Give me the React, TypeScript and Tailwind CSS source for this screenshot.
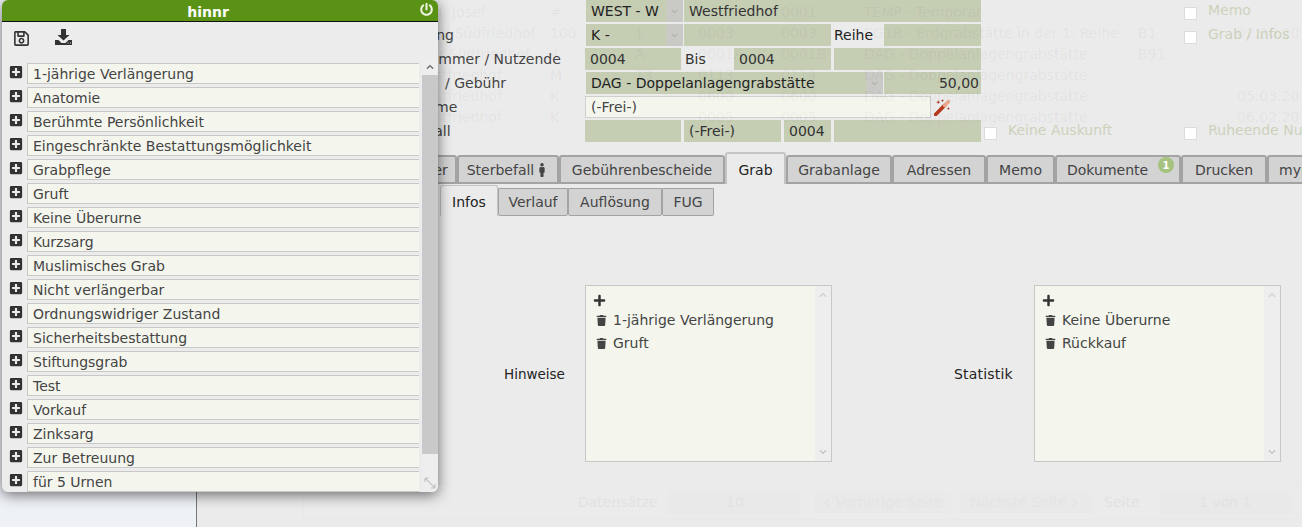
import React from "react";
import { FaPlusSquare, FaRegSave, FaPlus, FaTrash, FaMale, FaChevronUp, FaChevronDown, FaPowerOff, FaChevronLeft, FaChevronRight } from "react-icons/fa";

const FONT = "font-['DejaVu_Sans',sans-serif]";

const hints = [
  "1-jährige Verlängerung", "Anatomie", "Berühmte Persönlichkeit", "Eingeschränkte Bestattungsmöglichkeit",
  "Grabpflege", "Gruft", "Keine Überurne", "Kurzsarg", "Muslimisches Grab", "Nicht verlängerbar",
  "Ordnungswidriger Zustand", "Sicherheitsbestattung", "Stiftungsgrab", "Test", "Vorkauf", "Zinksarg",
  "Zur Betreuung", "für 5 Urnen",
];

const ghostRows = [
  { pl: "pl-[216px]", c: ["Graf, Josef", "#", "", "", "0001", "TEMP - Temporär", "", ""] },
  { pl: "pl-[225px]", c: ["Neu Südfriedhof", "100", "1", "0003", "0003", "EG1R - Erdgrabstätte in der 1. Reihe", "B1", "02.20.20"] },
  { pl: "pl-[214px]", c: ["Alter Südfriedhof", "4", "A", "0001A", "0001B", "DAG - Doppelanlagengrabstätte", "B91", ""] },
  { pl: "pl-[216px]", c: ["Westfriedhof", "M", "13", "0113", "0114", "DAG - Doppelanlagengrabstätte", "", ""] },
  { pl: "pl-[216px]", c: ["Westfriedhof", "K", "", "0600", "0600", "DAG - Doppelanlagengrabstätte", "", "05.03.20"] },
  { pl: "pl-[216px]", c: ["Westfriedhof", "K", "", "0005", "0005", "DAG - Doppelanlagengrabstätte", "", "06.02.20"] },
];

const tabs: { label: string; w: string; extra?: React.ReactNode; active?: boolean }[] = [
  { label: "Nutzer", w: "w-[65px]" },
  { label: "Sterbefall", w: "w-[102px]", extra: <FaMale className="text-[14px] text-[#444] ml-[1px]" /> },
  { label: "Gebührenbescheide", w: "w-[166px]" },
  { label: "Grab", w: "w-[61px]", active: true },
  { label: "Grabanlage", w: "w-[106px]" },
  { label: "Adressen", w: "w-[94px]" },
  { label: "Memo", w: "w-[69px]" },
  { label: "Dokumente", w: "w-[126px]" },
  { label: "Drucken", w: "w-[86px]" },
];

function Field({ w, children, right }: { w: string; children?: React.ReactNode; right?: boolean }) {
  return (
    <div className={`${w} h-[22px] shrink-0 bg-[#c5cdb3] flex items-center pt-[1px] text-[#333] ${right ? "justify-end pr-[2px]" : "pl-[5px]"}`}>
      {children}
    </div>
  );
}

function SelectField({ w, children }: { w: string; children: React.ReactNode }) {
  return (
    <div className={`${w} h-[22px] shrink-0 bg-[#c5cdb3] flex items-center pl-[5px] text-[#222] relative overflow-hidden`}>
      <span className="flex-1 whitespace-nowrap overflow-hidden pt-[1px]">{children}</span>
      <span className="w-[17px] h-[22px] bg-[#c9c9c5] flex items-center justify-center shrink-0">
        <FaChevronDown className="text-[7px] text-[#b0b0ac]" />
      </span>
    </div>
  );
}

function Check({ label, cls }: { label: string; cls: string }) {
  return (
    <div className={`flex items-center h-[22px] shrink-0 ${cls}`}>
      <span className="w-[13px] h-[13px] bg-white border border-[#dcdcdc] mt-[4px] shrink-0" />
      <span className="ml-[11px] text-[#ccd2bb] whitespace-nowrap -mt-[2px]">{label}</span>
    </div>
  );
}

function Label({ children, pl }: { children?: React.ReactNode; pl: string }) {
  return <div className={`w-[388px] shrink-0 pt-[1px] text-[#444] whitespace-nowrap overflow-hidden ${pl}`}>{children}</div>;
}

function ListBox({ items }: { items: string[] }) {
  return (
    <div className="w-[247px] h-[177px] shrink-0 border border-[#c8c8c8] bg-[#f4f6ee] flex">
      <div className="flex-1 pt-[8px] pl-[7px] text-[#444]">
        <FaPlus className="text-[13px] text-[#333]" />
        <div className="mt-[2px]">
          {items.map((t) => (
            <div key={t} className="flex items-center h-[23px] pl-[3px]">
              <FaTrash className="text-[11px] text-[#444] mr-[6px]" />
              <span>{t}</span>
            </div>
          ))}
        </div>
      </div>
      <div className="w-[16px] bg-[#eeeeee] flex flex-col justify-between items-center py-[5px]">
        <FaChevronUp className="text-[8px] text-[#d0d0d0]" />
        <FaChevronDown className="text-[8px] text-[#c4c4c4]" />
      </div>
    </div>
  );
}

export default function App() {
  return (
    <div className={`relative w-[1302px] h-[527px] overflow-hidden bg-[#ebebeb] flex text-[14px] ${FONT}`}>
      <aside className="w-[197px] h-full bg-[#eef1f6] border-r border-[#777] shrink-0" />

      <main className="flex-1 min-w-0 relative">
        {/* form */}
        <div className="flex flex-col gap-[2px]">
          <div className="flex h-[22px] items-center">
            <Label pl="pl-[198px]" />
            <div className="w-[1px] shrink-0" />
            <SelectField w="w-[97px]">WEST - W</SelectField>
            <div className="w-[1px] shrink-0" />
            <Field w="w-[297px]">Westfriedhof</Field>
            <Check label="Memo" cls="ml-[203px]" />
          </div>
          <div className="flex h-[22px] items-center">
            <Label pl="pl-[196px]">Ordnung</Label>
            <div className="w-[1px] shrink-0" />
            <SelectField w="w-[97px]">K -</SelectField>
            <div className="w-[1px] shrink-0" />
            <Field w="w-[147px]" />
            <span className="w-[53px] shrink-0 pl-[3px] pt-[1px] text-[#222]">Reihe</span>
            <Field w="w-[97px]" />
            <Check label="Grab / Infos" cls="ml-[203px]" />
          </div>
          <div className="flex h-[22px] items-center">
            <Label pl="pl-[222px]">Nummer / Nutzende</Label>
            <Field w="w-[96px]">0004</Field>
            <span className="w-[53px] shrink-0 pl-[4px] pt-[1px] text-[#333]">Bis</span>
            <Field w="w-[97px]">0004</Field>
            <div className="w-[3px] shrink-0" />
            <Field w="w-[147px]" />
          </div>
          <div className="flex h-[22px] items-center">
            <Label pl="pl-[248px]">/ Gebühr</Label>
            <div className="w-[1px] shrink-0" />
            <SelectField w="w-[297px]">DAG - Doppelanlagengrabstätte</SelectField>
            <div className="w-[1px] shrink-0" />
            <Field w="w-[97px]" right>50,00</Field>
          </div>
          <div className="flex h-[22px] items-center">
            <Label pl="pl-[219px]">Name</Label>
            <div className="w-[346px] h-[22px] shrink-0 bg-[#f4f6ee] border border-[#cfcfcf] flex items-center pl-[5px] text-[#444]">(-Frei-)</div>
            <svg viewBox="0 0 16 16" className="w-[17px] h-[17px] ml-[3px] shrink-0">
              <path d="M1.5 14.5 L10 6" stroke="#b5391c" strokeWidth="3.4" strokeLinecap="round" />
              <path d="M10 6 L13.5 2.5" stroke="#e8a58c" strokeWidth="3.4" strokeLinecap="round" />
              <path d="M4 1.5v3M2.5 3h3M8 0.5v2M7 1.5h2M13.5 8v2M12.5 9h2" stroke="#a8321a" strokeWidth="0.8" />
            </svg>
          </div>
          <div className="flex h-[22px] items-center">
            <Label pl="pl-[186px]">Sterbefall</Label>
            <Field w="w-[96px]" />
            <div className="w-[3px] shrink-0" />
            <Field w="w-[97px]">(-Frei-)</Field>
            <div className="w-[3px] shrink-0" />
            <Field w="w-[47px]">0004</Field>
            <div className="w-[3px] shrink-0" />
            <Field w="w-[147px]" />
            <Check label="Keine Auskunft" cls="ml-[3px]" />
            <Check label="Ruheende Nutzung" cls="ml-[72px]" />
          </div>
        </div>

        {/* tabs */}
        <div className="flex items-end h-[32px] mt-[10px] ml-[195px] whitespace-nowrap">
          {tabs.map((t) => (
            <div
              key={t.label}
              className={`${t.w} shrink-0 relative flex items-center rounded-t-[3px] border-x-2 border-t-2 ${
                t.label === "Dokumente" ? "justify-start pl-[10px]" : "justify-center"
              } ${
                t.active
                  ? "h-[32px] pt-[3px] bg-[#ebebeb] border-[#c4c4c4] border-x border-t text-[#222]"
                  : "h-[29px] pt-[1px] bg-[#d3d3d3] border-[#a3a3a3] border-b-2 text-[#444]"
              }`}
            >
              {t.label}
              {t.extra}
              {t.label === "Dokumente" && (
                <span className="absolute right-[5px] top-[0px] w-[16px] h-[16px] rounded-full bg-[#a5c27f] text-white text-[10px] font-bold flex items-center justify-center">1</span>
              )}
            </div>
          ))}
          <div className="w-[60px] shrink-0 h-[29px] pt-[1px] bg-[#d3d3d3] border-2 border-[#a3a3a3] border-r-0 rounded-t-[3px] flex items-center pl-[10px] text-[#444] overflow-hidden">mylife</div>
        </div>

        {/* sub tabs */}
        <div className="flex items-end h-[31px] mt-[1px] ml-[243px]">
          <div className="w-[58px] h-[31px] pt-[3px] bg-[#ebebeb] border-x border-t border-[#c4c4c4] rounded-t-[3px] flex items-center justify-center text-[#222]">Infos</div>
          <div className="w-[70px] h-[28px] pt-[1px] bg-[#d3d3d3] border border-[#a3a3a3] rounded-b-[2px] flex items-center justify-center text-[#444]">Verlauf</div>
          <div className="w-[94px] h-[28px] pt-[1px] bg-[#d3d3d3] border border-[#a3a3a3] rounded-b-[2px] flex items-center justify-center text-[#444]">Auflösung</div>
          <div className="w-[52px] h-[28px] pt-[1px] bg-[#d3d3d3] border border-[#a3a3a3] rounded-b-[2px] flex items-center justify-center text-[#444]">FUG</div>
        </div>

        {/* lists */}
        <div className="flex items-center mt-[69px] ml-[307px] text-[#222]">
          <span className="w-[81px] shrink-0 text-[13.5px] pt-[2px]">Hinweise</span>
          <ListBox items={["1-jährige Verlängerung", "Gruft"]} />
          <span className="w-[80px] ml-[122px] shrink-0 tracking-[0.2px] pt-[2px]">Statistik</span>
          <ListBox items={["Keine Überurne", "Rückkauf"]} />
        </div>

        {/* faded pager */}
        <div className="mt-[21px] ml-[106px] w-[1100px] h-[37px] pt-[2px] border-t border-l border-b border-[#e8e8e8] rounded-l-[4px] flex items-center pl-[274px] text-[#e2e2e2] whitespace-nowrap">
          <span className="w-[91px] shrink-0">Datensätze</span>
          <div className="w-[132px] h-[22px] shrink-0 bg-[#e9e9e9] rounded-[3px] flex items-center justify-center">10</div>
          <div className="w-[137px] h-[20px] shrink-0 ml-[13px] bg-[#e9e9e9] flex items-center justify-center text-[#e4e4e4] gap-[3px] overflow-hidden"><FaChevronLeft className="text-[10px]" />Vorherige Seite</div>
          <div className="w-[132px] h-[20px] shrink-0 ml-[8px] bg-[#e9e9e9] flex items-center justify-center text-[#e4e4e4] gap-[3px] overflow-hidden">Nächste Seite<FaChevronRight className="text-[10px]" /></div>
          <span className="w-[56px] shrink-0 ml-[13px]">Seite</span>
          <div className="w-[131px] h-[22px] shrink-0 bg-[#e9e9e9] rounded-[3px] flex items-center justify-center">1 von 1</div>
        </div>

        {/* faded record list showing through the form */}
        <div className="absolute left-0 top-[2px] pointer-events-none text-black/[0.05] whitespace-nowrap">
          {ghostRows.map((r, i) => (
            <div key={i} className="flex h-[21px] items-center">
              <span className={`w-[353px] shrink-0 ${r.pl}`}>{r.c[0]}</span>
              <span className="w-[85px] shrink-0">{r.c[1]}</span>
              <span className="w-[63px] shrink-0">{r.c[2]}</span>
              <span className="w-[83px] shrink-0">{r.c[3]}</span>
              <span className="w-[83px] shrink-0">{r.c[4]}</span>
              <span className="w-[274px] shrink-0">{r.c[5]}</span>
              <span className="w-[99px] shrink-0">{r.c[6]}</span>
              <span>{r.c[7]}</span>
            </div>
          ))}
        </div>
      </main>

      {/* hinnr popup */}
      <div className="absolute left-[2px] top-0 w-[436px] h-[492px] bg-[#ececec] rounded-[6px] shadow-[0_3px_14px_rgba(0,0,0,0.55)] overflow-hidden flex flex-col">
        <div className="h-[22px] pr-[24px] pt-[3px] bg-[#5a9216] border-b border-[#111] relative flex items-center justify-center text-white font-bold shrink-0">
          hinnr
          <FaPowerOff className="absolute right-[5px] top-[3px] text-[13px] text-[#eef6e2]" />
        </div>
        <div className="h-[36px] flex items-start pt-[8px] pl-[11px] shrink-0">
          <FaRegSave className="text-[17px] text-[#333]" />
          <svg viewBox="0 0 17 16" className="w-[17px] h-[16px] ml-[25px] -mt-[1px]">
            <path d="M6 0h5v6h3.5L8.5 11.5 2.5 6H6z" fill="#333" />
            <path d="M0 11h3.5l3 3h4l3-3H17v5H0z" fill="#333" />
            <path d="M12.5 14h1M15 14h1" stroke="#ddd" strokeWidth="1" />
          </svg>
        </div>
        <div className="flex-1 flex min-h-0 overflow-hidden">
          <div className="flex-1 pt-[5px] flex flex-col gap-[3px] overflow-hidden">
            {hints.map((h) => (
              <div key={h} className="flex h-[21px] shrink-0">
                <FaPlusSquare className="text-[14px] text-[#333] ml-[7px] mt-[2px] shrink-0" />
                <div className="ml-[4px] flex-1 bg-[#f4f6ee] border-l border-t border-b border-[#c8c8c8] pl-[5px] text-[#444] leading-[20px]">{h}</div>
              </div>
            ))}
          </div>
          <div className="w-[16px] ml-[3px] flex flex-col shrink-0 relative">
            <div className="h-[17px] bg-[#eeeeee] flex items-center justify-center">
              <FaChevronUp className="text-[8px] text-[#666]" />
            </div>
            <div className="h-[379px] bg-[#c9c9c9]" />
            <div className="flex-1 bg-[#eeeeee]" />
            <svg viewBox="0 0 12 12" className="absolute right-[2px] bottom-[3px] w-[12px] h-[12px]">
              <path d="M1 1h4M1 1v4M1 1l10 10M11 11h-4M11 11v-4" stroke="#c4c4c4" strokeWidth="1.2" fill="none" />
            </svg>
          </div>
        </div>
      </div>
    </div>
  );
}
